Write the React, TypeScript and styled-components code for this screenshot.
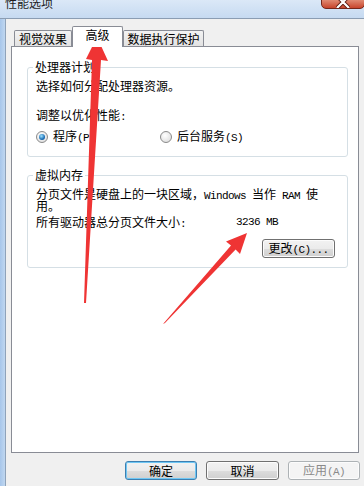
import React from 'react';
import styled, { createGlobalStyle } from 'styled-components';

const Global = createGlobalStyle`
  html, body { margin: 0; padding: 0; background: #f0f0f0; }
  body {
    font-family: "Noto Sans CJK SC", "Liberation Sans", sans-serif;
    font-size: 12px;
    color: #000;
  }
  * { box-sizing: border-box; }
`;

const Window = styled.div`
  position: relative;
  width: 364px;
  height: 486px;
  overflow: hidden;
  display: flex;
  flex-direction: column;
  background: #f0f0f0;
`;

const TitleBar = styled.div`
  flex: none;
  height: 19px;
  display: flex;
  justify-content: space-between;
  align-items: flex-start;
  padding-left: 5px;
  background: linear-gradient(to bottom, #dbe8f7, #c6daf1);
  border-bottom: 1px solid #8b9db3;
  overflow: hidden;
`;

const TitleText = styled.div`
  font-size: 12px;
  line-height: 14px;
  margin-top: -4px;
  color: #1e1e1e;
`;

const CloseButton = styled.div`
  width: 44px;
  height: 10px;
  margin-top: -1px;
  margin-right: -1px;
  display: flex;
  justify-content: center;
  align-items: flex-start;
  background: linear-gradient(to bottom, #e08a72, #c8452c);
  border: 1px solid #76281b;
  border-radius: 0 0 5px 5px;
  overflow: hidden;
`;

const Main = styled.div`
  flex: 1;
  display: flex;
`;

const LeftFrame = styled.div`
  width: 5px;
  background: linear-gradient(to right, #a7c6ea, #c0d7f0);
`;

const Content = styled.div`
  flex: 1;
  display: flex;
  flex-direction: column;
  padding: 7px 5px 0 5px;
  border-left: 1px solid #8fa3ba;
`;

const TabStrip = styled.div`
  height: 20px;
  display: flex;
  align-items: flex-end;
  padding-left: 3px;
`;

const Tab = styled.div<{ $active?: boolean; $w: number }>`
  width: ${p => p.$w}px;
  height: ${p => (p.$active ? 21 : 16)}px;
  margin-bottom: ${p => (p.$active ? -1 : 0)}px;
  position: relative;
  z-index: ${p => (p.$active ? 2 : 0)};
  border: 1px solid #898c95;
  border-bottom: none;
  border-radius: 2px 2px 0 0;
  background: ${p => (p.$active ? '#fff' : 'linear-gradient(to bottom, #f3f3f3, #e2e2e2)')};
  text-align: center;
  font-size: 12px;
  line-height: 14px;
  padding-top: 1px;
  color: #000;
`;

const Panel = styled.div`
  height: 407px;
  border: 1px solid #898c95;
  background: #fff;
  padding: 13px 10px 0 15px;
  display: flex;
  flex-direction: column;
`;

const Group = styled.fieldset<{ $gap?: number }>`
  margin: ${p => p.$gap ?? 0}px 0 0 0;
  min-width: 0;
  border: 1px solid #d5dfe5;
  border-radius: 3px;
  padding: 0 8px ${p => (p.$gap ? 9 : 12)}px 8px;
`;

const Legend = styled.legend`
  margin-left: -3px;
  padding: 0 2px;
  font-size: 12px;
  line-height: 14px;
`;

const Line = styled.div<{ $mt: number }>`
  margin-top: ${p => p.$mt}px;
  line-height: 14px;
  white-space: nowrap;
`;

const ParaLine = styled.div<{ $first?: boolean }>`
  margin-top: ${p => (p.$first ? 6 : 0)}px;
  line-height: 12px;
  height: 12px;
  white-space: nowrap;
`;

const Mono = styled.span`
  font-family: "Liberation Mono", "DejaVu Sans Mono", monospace;
  font-size: 11px;
  letter-spacing: -0.6px;
`;

const RadioRow = styled.div`
  margin-top: 6px;
  height: 14px;
  display: flex;
  align-items: center;
`;

const RadioOption = styled.label<{ $w?: number }>`
  display: flex;
  align-items: center;
  gap: 5px;
  width: ${p => (p.$w ? `${p.$w}px` : 'auto')};
  line-height: 14px;
`;

const Radio = styled.span<{ $checked?: boolean }>`
  width: 12px;
  height: 12px;
  border-radius: 50%;
  border: 1px solid #8a8a8a;
  background: radial-gradient(circle at 40% 35%, #ffffff, #d8d8d8);
  display: flex;
  align-items: center;
  justify-content: center;
  &::after {
    content: '';
    display: ${p => (p.$checked ? 'block' : 'none')};
    width: 6px;
    height: 6px;
    border-radius: 50%;
    background: radial-gradient(circle at 40% 35%, #9fe3ff, #1c6fb6 60%, #0d3f7a);
  }
`;

const SizeRow = styled.div`
  margin-top: 3px;
  line-height: 14px;
  display: flex;
`;

const SizeLabel = styled.span`
  width: 200px;
`;

const ButtonLine = styled.div`
  margin-top: 8px;
  display: flex;
  justify-content: flex-end;
  padding-right: 4px;
`;

const Button = styled.button<{ $w: number; $default?: boolean }>`
  width: ${p => p.$w}px;
  height: 19px;
  padding: 0;
  font-family: "Noto Sans CJK SC", "Liberation Sans", sans-serif;
  font-size: 12px;
  line-height: 14px;
  color: ${p => (p.disabled ? '#8a8a8a' : '#000')};
  border: 1px solid ${p => (p.disabled ? '#adb2b5' : p.$default ? '#3c7fb1' : '#707070')};
  border-radius: 3px;
  background: ${p =>
    p.disabled
      ? '#f4f4f4'
      : 'linear-gradient(to bottom, #f2f2f2 0%, #ebebeb 50%, #dddddd 51%, #cfcfcf 100%)'};
  box-shadow: ${p => (p.$default ? 'inset 0 0 0 1px #6fc7f4' : 'inset 0 0 0 1px #fcfcfc')};
`;

const ButtonRow = styled.div`
  margin-top: 8px;
  display: flex;
  justify-content: flex-end;
  gap: 9px;
  margin-right: -1px;
`;

const Overlay = styled.svg`
  position: absolute;
  left: 0;
  top: 0;
  pointer-events: none;
`;

export default function App() {
  return (
    <>
      <Global />
      <Window>
        <TitleBar>
          <TitleText>性能选项</TitleText>
          <CloseButton>
            <svg width="14" height="8" viewBox="0 0 14 8">
              <path d="M1 -4 L7 2 L13 -4 M1 8 L7 2 L13 8" stroke="#5a1a10" strokeWidth="4" fill="none" />
              <path d="M1 -4 L7 2 L13 -4 M1 8 L7 2 L13 8" stroke="#fff" strokeWidth="2.2" fill="none" />
            </svg>
          </CloseButton>
        </TitleBar>
        <Main>
          <LeftFrame />
          <Content>
            <TabStrip>
              <Tab $w={58}>视觉效果</Tab>
              <Tab $w={51} $active>高级</Tab>
              <Tab $w={81}>数据执行保护</Tab>
            </TabStrip>
            <Panel>
              <Group>
                <Legend>处理器计划</Legend>
                <Line $mt={5}>选择如何分配处理器资源。</Line>
                <Line $mt={15}>调整以优化性能<Mono>:</Mono></Line>
                <RadioRow>
                  <RadioOption $w={124}>
                    <Radio $checked />
                    <span>程序<Mono>(P)</Mono></span>
                  </RadioOption>
                  <RadioOption>
                    <Radio />
                    <span>后台服务<Mono>(S)</Mono></span>
                  </RadioOption>
                </RadioRow>
              </Group>
              <Group $gap={11}>
                <Legend>虚拟内存</Legend>
                <ParaLine $first>
                  分页文件是硬盘上的一块区域，<Mono>Windows </Mono>当作<Mono> RAM </Mono>使
                </ParaLine>
                <ParaLine>用。</ParaLine>
                <SizeRow>
                  <SizeLabel>所有驱动器总分页文件大小<Mono>:</Mono></SizeLabel>
                  <Mono>3236 MB</Mono>
                </SizeRow>
                <ButtonLine>
                  <Button $w={73}>更改<Mono>(C)...</Mono></Button>
                </ButtonLine>
              </Group>
            </Panel>
            <ButtonRow>
              <Button $w={72} $default>确定</Button>
              <Button $w={73}>取消</Button>
              <Button $w={72} disabled>应用<Mono>(A)</Mono></Button>
            </ButtonRow>
          </Content>
        </Main>
        <Overlay width="364" height="486" viewBox="0 0 364 486">
          <polygon
            points="97,37 108,61 101,60 86,303 84,303 92,60 86,59"
            fill="#ef3434"
          />
          <polygon
            points="247,233 226,241.5 231,245.6 163,324 165,323 235.6,249.6 240,254"
            fill="#ef3434"
          />
        </Overlay>
      </Window>
    </>
  );
}
